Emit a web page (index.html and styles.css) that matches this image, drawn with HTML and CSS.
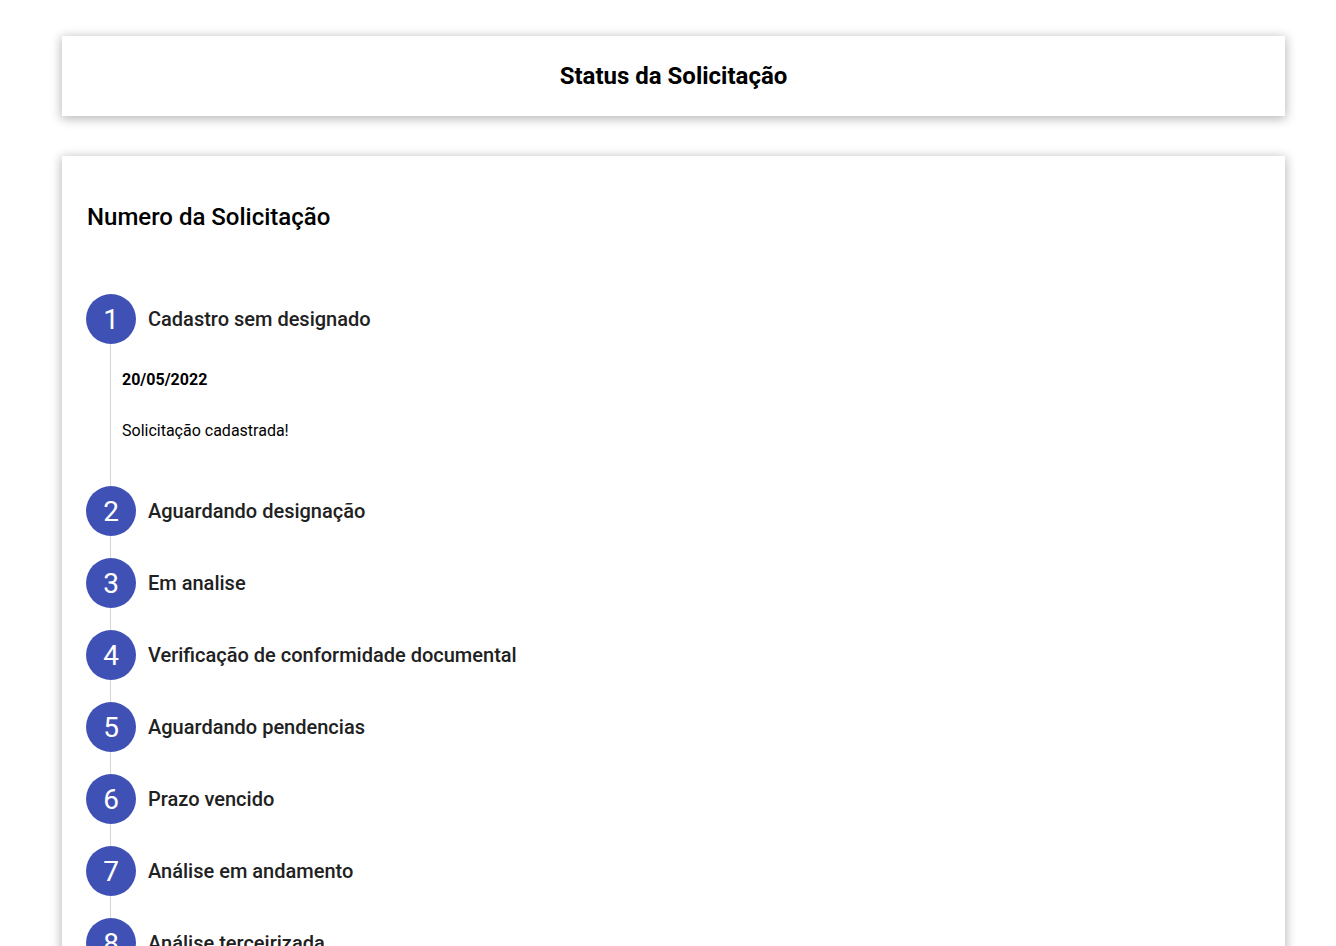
FILE: index.html
```html
<!DOCTYPE html>
<html lang="pt-BR">
<head>
<meta charset="utf-8">
<title>Status da Solicitação</title>
<link rel="stylesheet" href="styles.css">
</head>
<body>
<main class="page">
  <header class="card header-card">
    <h1 class="header-title">Status da Solicitação</h1>
  </header>
  <section class="card main-card">
    <h2 class="card-title">Numero da Solicitação</h2>
    <ol class="stepper">
      <li class="step">
        <div class="step-head"><span class="step-num">1</span><span class="step-label">Cadastro sem designado</span></div>
        <div class="step-body step-body-open">
          <p class="step-date">20/05/2022</p>
          <p class="step-text">Solicitação cadastrada!</p>
        </div>
      </li>
      <li class="step">
        <div class="step-head"><span class="step-num">2</span><span class="step-label">Aguardando designação</span></div>
        <div class="step-body"></div>
      </li>
      <li class="step">
        <div class="step-head"><span class="step-num">3</span><span class="step-label">Em analise</span></div>
        <div class="step-body"></div>
      </li>
      <li class="step">
        <div class="step-head"><span class="step-num">4</span><span class="step-label">Verificação de conformidade documental</span></div>
        <div class="step-body"></div>
      </li>
      <li class="step">
        <div class="step-head"><span class="step-num">5</span><span class="step-label">Aguardando pendencias</span></div>
        <div class="step-body"></div>
      </li>
      <li class="step">
        <div class="step-head"><span class="step-num">6</span><span class="step-label">Prazo vencido</span></div>
        <div class="step-body"></div>
      </li>
      <li class="step">
        <div class="step-head"><span class="step-num">7</span><span class="step-label">Análise em andamento</span></div>
        <div class="step-body"></div>
      </li>
      <li class="step">
        <div class="step-head"><span class="step-num">8</span><span class="step-label">Análise terceirizada</span></div>
        <div class="step-body"></div>
      </li>
      <li class="step">
        <div class="step-head"><span class="step-num">9</span><span class="step-label">Finalizado</span></div>
      </li>
    </ol>
  </section>
</main>
</body>
</html>
```
FILE: styles.css
```css
* { box-sizing: border-box; }
html, body { margin: 0; padding: 0; background: #fff; }
body {
  font-family: Roboto, "Liberation Sans", Arial, sans-serif;
  color: #000;
}
.page {
  padding: 36px 51px 40px 62px;
  display: flex;
  flex-direction: column;
  gap: 40px;
}
.card {
  background: #fff;
  box-shadow: 0 2px 10px 1px rgba(0,0,0,0.28);
}
.header-card {
  height: 80px;
  display: flex;
  align-items: center;
  justify-content: center;
}
.header-title {
  margin: 0;
  font-size: 24px;
  font-weight: 700;
  line-height: 30px;
}
.main-card {
  padding: 46px 24px 24px 24px;
}
.card-title {
  margin: 0 0 62px 1px;
  font-size: 24px;
  font-weight: 500;
  line-height: 30px;
}
.stepper {
  list-style: none;
  margin: 0;
  padding: 0;
}
.step-head {
  display: flex;
  align-items: center;
  gap: 12px;
  height: 50px;
}
.step-num {
  width: 50px;
  height: 50px;
  border-radius: 50%;
  background: #3f51b5;
  color: #fff;
  font-size: 28px;
  font-weight: 400;
  display: flex;
  align-items: center;
  justify-content: center;
  flex-shrink: 0;
}
.step-label {
  font-size: 20px;
  font-weight: 500;
  color: #212121;
  padding-bottom: 1px;
}
.step-body {
  margin-left: 24px;
  border-left: 1px solid #d6d6d6;
  height: 22px;
}
.step-body-open {
  height: auto;
  padding: 26px 0 45px 11px;
}
.step-date {
  margin: 0 0 31px;
  font-size: 16px;
  font-weight: 700;
  line-height: 20px;
}
.step-text {
  margin: 0;
  font-size: 16px;
  line-height: 20px;
}
```
